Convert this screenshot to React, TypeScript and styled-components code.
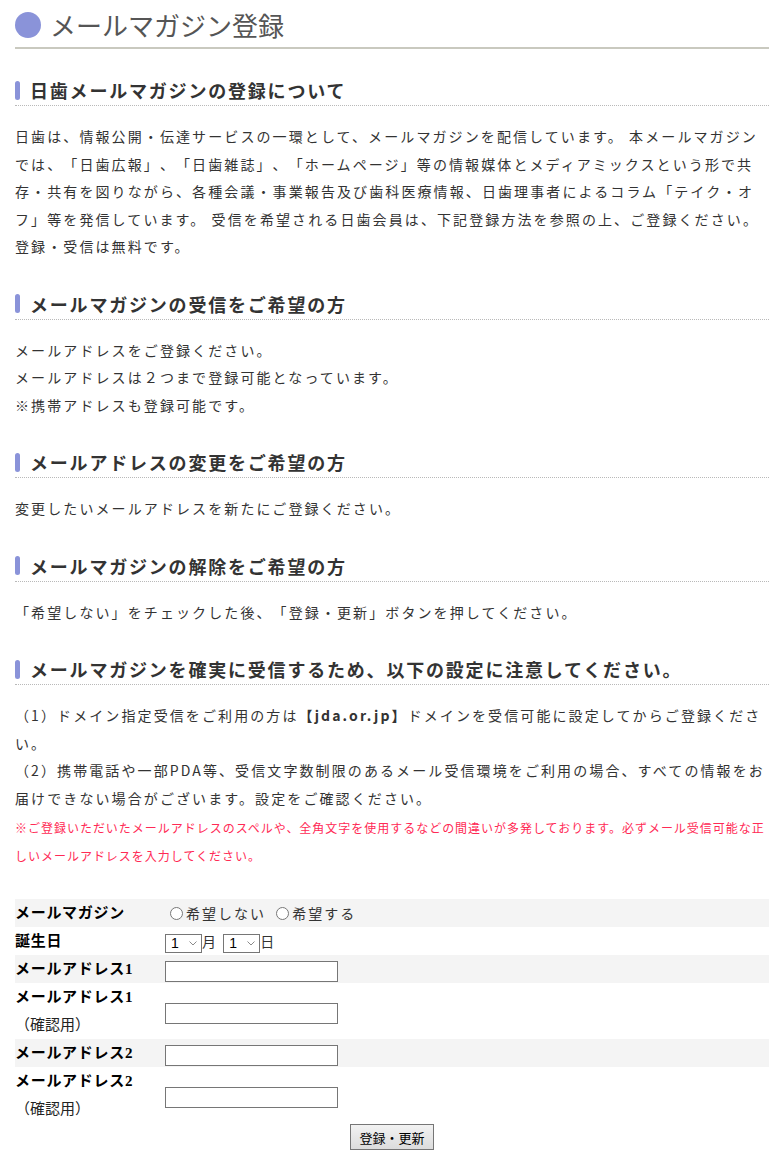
import React from 'react';
import styled, { createGlobalStyle } from 'styled-components';

const GlobalStyle = createGlobalStyle`
  body {
    margin: 0;
    background: #fff;
    color: #333;
    font-family: "Noto Sans CJK JP", "Noto Sans", sans-serif;
    text-spacing-trim: space-all;
  }
`;

const Page = styled.div`
  padding: 7px 1px 20px 15px;
`;

const Title = styled.h1`
  display: flex;
  align-items: center;
  gap: 9px;
  margin: 0;
  padding-bottom: 4px;
  border-bottom: 2px solid #c9c9bf;
  font-size: 26px;
  line-height: 36px;
  font-weight: 400;
  color: #555;
`;

const Dot = styled.span`
  width: 26px;
  height: 26px;
  border-radius: 50%;
  background: #8a93d9;
  flex: none;
`;

const Section = styled.section<{ $top?: number }>`
  margin-top: ${(p) => p.$top ?? 31}px;
`;

const Heading = styled.h2`
  display: flex;
  align-items: center;
  gap: 10px;
  margin: 0;
  padding-bottom: 3px;
  border-bottom: 1px dotted #b9b9b9;
  font-size: 18px;
  line-height: 24px;
  font-weight: 700;
  letter-spacing: 1.8px;
  color: #333;
`;

const Bar = styled.span`
  width: 5px;
  height: 19px;
  border-radius: 3px;
  background: #8a93d9;
  flex: none;
`;

const Text = styled.p`
  margin: 17px 0 0;
  font-size: 14px;
  line-height: 27.5px;
  letter-spacing: 2.1px;
`;

const Note = styled.p`
  margin: 2px 0 0;
  font-size: 12px;
  line-height: 28px;
  letter-spacing: 0.98px;
  color: #ff2a55;
`;

const Form = styled.form`
  margin-top: 29px;
`;

const Table = styled.table`
  width: 100%;
  border-collapse: collapse;
`;

const Row = styled.tr<{ $shade?: boolean }>`
  background: ${(p) => (p.$shade ? '#f4f4f4' : 'transparent')};
`;

const Label = styled.th`
  width: 150px;
  padding: 0;
  text-align: left;
  vertical-align: middle;
  font-family: "Liberation Serif", "Noto Sans CJK JP", serif;
  font-size: 15px;
  line-height: 28px;
  font-weight: 700;
  letter-spacing: 0.7px;
  color: #000;
`;

const Sub = styled.span`
  display: block;
  font-weight: 400;
  letter-spacing: 0;
  color: #222;
`;

const Field = styled.td`
  padding: 0;
  vertical-align: middle;
  font-size: 14px;
  line-height: 28px;
  letter-spacing: 2px;
  color: #333;
`;

const Radio = styled.input`
  margin: 3px 3px 0 5px;
  width: 13px;
  height: 13px;
  vertical-align: -1px;
`;

const SelectWrap = styled.span`
  position: relative;
  display: inline-block;
  vertical-align: middle;
  line-height: 0;
`;

const Select = styled.select`
  appearance: none;
  box-sizing: border-box;
  width: 37px;
  height: 19px;
  margin: 0;
  padding: 0 0 0 5px;
  font-family: "Liberation Sans", sans-serif;
  font-size: 14px;
  letter-spacing: 0;
  border: 1px solid #767676;
  border-radius: 0;
  background: #fff;
  color: #000;
`;

const Chevron = styled.svg`
  position: absolute;
  right: 5px;
  top: 7px;
  pointer-events: none;
`;

const TextInput = styled.input`
  box-sizing: border-box;
  width: 173px;
  height: 21px;
  padding: 1px 2px;
  border: 1px solid #767676;
  border-radius: 0;
  vertical-align: middle;
  font-family: "Liberation Sans", sans-serif;
  font-size: 13px;
`;

const Actions = styled.div`
  display: flex;
  justify-content: center;
  margin-top: 1px;
`;

const Submit = styled.button`
  height: 26px;
  padding: 0 8px;
  border: 1px solid #767676;
  border-radius: 0;
  background: linear-gradient(#f2f2f2, #dcdcdc);
  font-family: "Noto Sans CJK JP", sans-serif;
  font-size: 13px;
  color: #000;
`;

const Bold = styled.strong`
  font-weight: 700;
`;

const sections = [
  {
    title: 'メールマガジンの受信をご希望の方',
    lines: ['メールアドレスをご登録ください。', 'メールアドレスは２つまで登録可能となっています。', '※携帯アドレスも登録可能です。'],
  },
  { title: 'メールアドレスの変更をご希望の方', lines: ['変更したいメールアドレスを新たにご登録ください。'] },
  { title: 'メールマガジンの解除をご希望の方', lines: ['「希望しない」をチェックした後、「登録・更新」ボタンを押してください。'] },
];

const NumberSelect = ({ count }: { count: number }) => (
  <SelectWrap>
    <Select defaultValue="1">
      {Array.from({ length: count }, (_, i) => (
        <option key={i}>{i + 1}</option>
      ))}
    </Select>
    <Chevron width="8" height="5" viewBox="0 0 8 5">
      <path d="M0.5 0.5 L4 4 L7.5 0.5" fill="none" stroke="#8a8a8a" strokeWidth="1" />
    </Chevron>
  </SelectWrap>
);

const App = () => {
  return (
    <Page>
      <GlobalStyle />
      <Title>
        <Dot />
        メールマガジン登録
      </Title>

      <Section $top={29}>
        <Heading>
          <Bar />
          日歯メールマガジンの登録について
        </Heading>
        <Text>
          日歯は、情報公開・伝達サービスの一環として、メールマガジンを配信しています。 本メールマガジンでは、「日歯広報」、「日歯雑誌」、「ホームページ」等の情報媒体とメディアミックスという形で共存・共有を図りながら、各種会議・事業報告及び歯科医療情報、日歯理事者によるコラム「テイク・オフ」等を発信しています。 受信を希望される日歯会員は、下記登録方法を参照の上、ご登録ください。登録・受信は無料です。
        </Text>
      </Section>

      {sections.map((s) => (
        <Section key={s.title}>
          <Heading>
            <Bar />
            {s.title}
          </Heading>
          <Text>
            {s.lines.map((l, i) => (
              <React.Fragment key={i}>
                {i > 0 && <br />}
                {l}
              </React.Fragment>
            ))}
          </Text>
        </Section>
      ))}

      <Section>
        <Heading>
          <Bar />
          メールマガジンを確実に受信するため、以下の設定に注意してください。
        </Heading>
        <Text>
          （1）ドメイン指定受信をご利用の方は<Bold>【jda.or.jp】</Bold>ドメインを受信可能に設定してからご登録ください。
          <br />
          （2）携帯電話や一部PDA等、受信文字数制限のあるメール受信環境をご利用の場合、すべての情報をお届けできない場合がございます。設定をご確認ください。
        </Text>
        <Note>
          ※ご登録いただいたメールアドレスのスペルや、全角文字を使用するなどの間違いが多発しております。必ずメール受信可能な正しいメールアドレスを入力してください。
        </Note>
      </Section>

      <Form onSubmit={(e) => e.preventDefault()}>
        <Table>
          <tbody>
            <Row $shade>
              <Label>メールマガジン</Label>
              <Field>
                <label>
                  <Radio type="radio" name="mag" value="0" />希望しない
                </label>{' '}
                <label>
                  <Radio type="radio" name="mag" value="1" />希望する
                </label>
              </Field>
            </Row>
            <Row>
              <Label>誕生日</Label>
              <Field>
                <NumberSelect count={12} />月 <NumberSelect count={31} />日
              </Field>
            </Row>
            <Row $shade>
              <Label>メールアドレス1</Label>
              <Field>
                <TextInput type="text" />
              </Field>
            </Row>
            <Row>
              <Label>
                メールアドレス1
                <Sub>（確認用）</Sub>
              </Label>
              <Field>
                <TextInput type="text" />
              </Field>
            </Row>
            <Row $shade>
              <Label>メールアドレス2</Label>
              <Field>
                <TextInput type="text" />
              </Field>
            </Row>
            <Row>
              <Label>
                メールアドレス2
                <Sub>（確認用）</Sub>
              </Label>
              <Field>
                <TextInput type="text" />
              </Field>
            </Row>
          </tbody>
        </Table>
        <Actions>
          <Submit type="submit">登録・更新</Submit>
        </Actions>
      </Form>
    </Page>
  );
};

export default App;
